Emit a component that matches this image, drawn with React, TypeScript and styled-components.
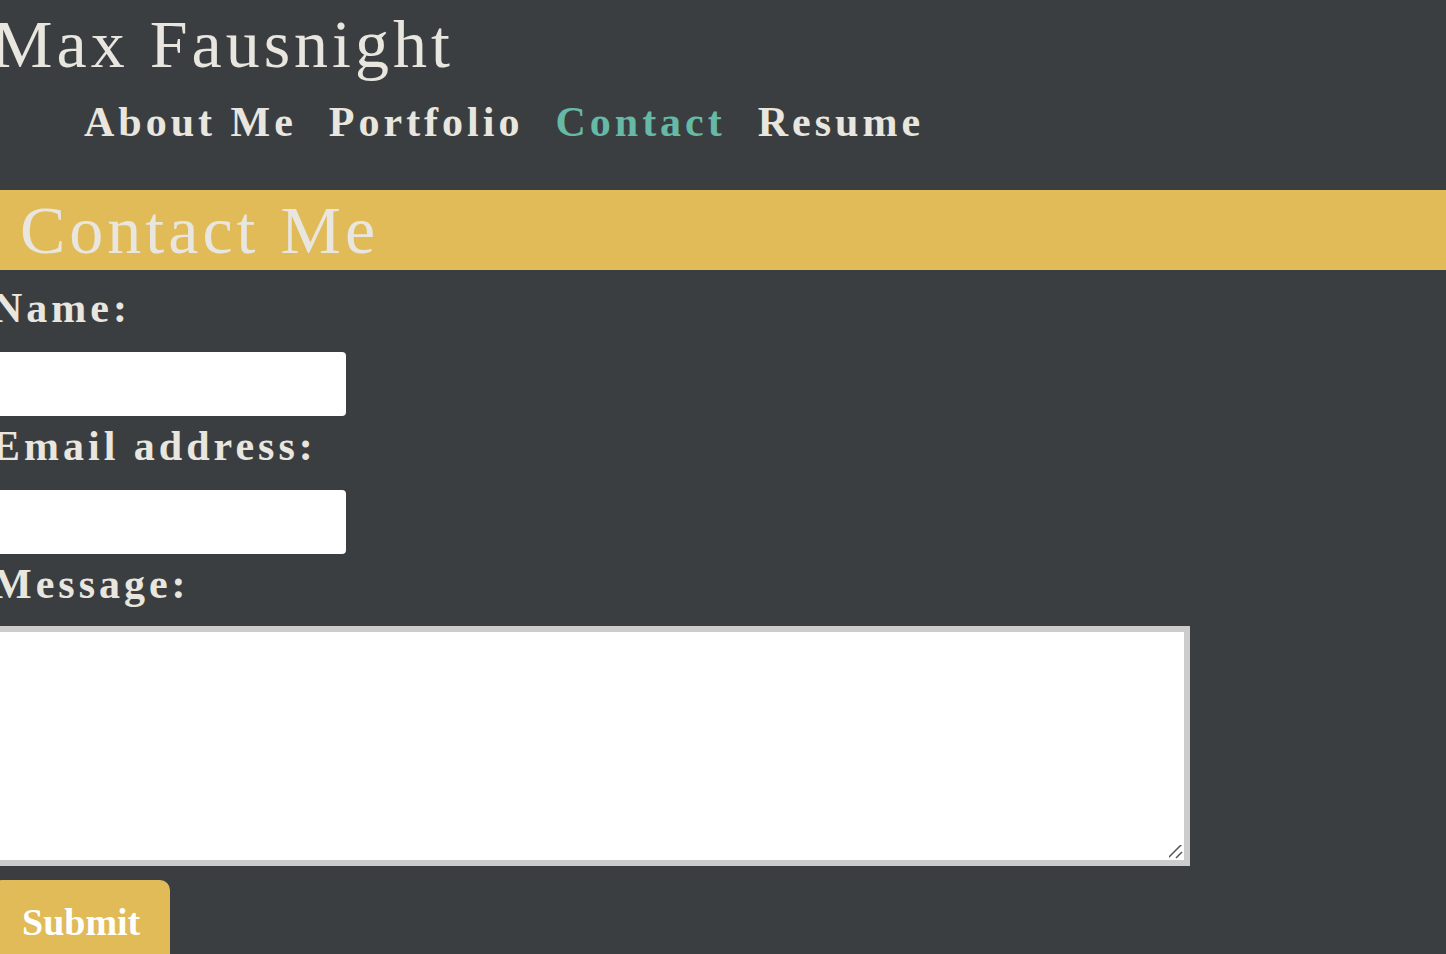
import React from "react";
import styled, { createGlobalStyle } from "styled-components";

const GlobalStyle = createGlobalStyle`
  * { box-sizing: border-box; }
  html { scrollbar-width: none; }
  body {
    margin: 0;
    background: #3b3e41;
    color: #e8e6df;
    font-family: "Liberation Serif", serif;
  }
`;

const Page = styled.div`
  margin-left: -8px;
`;

const Header = styled.header`
  padding: 4px 0 42px;
`;

const SiteTitle = styled.h1`
  margin: 0;
  font-size: 68px;
  line-height: 80px;
  font-weight: 400;
  letter-spacing: 4px;
`;

const Nav = styled.nav`
  display: flex;
  flex-wrap: wrap;
  gap: 32px;
  padding: 12px 0 0 92px;
`;

const NavLink = styled.a<{ $active?: boolean }>`
  color: ${(p) => (p.$active ? "#66b9a4" : "#e8e6df")};
  font-size: 42px;
  line-height: 52px;
  font-weight: 700;
  letter-spacing: 4px;
  text-decoration: none;
`;

const SectionTitle = styled.h2`
  margin: 0;
  padding-left: 28px;
  background: #e0bb58;
  font-size: 68px;
  line-height: 80px;
  font-weight: 400;
  letter-spacing: 4px;
`;

const Form = styled.form`
  display: flex;
  flex-direction: column;
  align-items: flex-start;
  padding-top: 8px;
`;

const Label = styled.label<{ $tight?: boolean }>`
  padding: 4px 0 ${(p) => (p.$tight ? 16 : 18)}px;
  font-size: 42px;
  line-height: 52px;
  font-weight: 700;
  letter-spacing: 4px;
`;

const TextInput = styled.input`
  width: 354px;
  height: 64px;
  padding: 8px;
  border: 0;
  border-radius: 4px;
  background: #fff;
  font-size: 26px;
`;

const Message = styled.textarea`
  width: 82.4%;
  height: 240px;
  padding: 8px;
  border: 6px solid #ccc;
  background: #fff;
  font-size: 26px;

  &::-webkit-scrollbar {
    width: 18px;
    height: 18px;
  }

  &::-webkit-resizer {
    background: url("data:image/svg+xml,%3Csvg xmlns='http://www.w3.org/2000/svg' width='18' height='18'%3E%3Cpath d='M2 16L16 2M10 16L16 10' stroke='%23555' stroke-width='1.5'/%3E%3C/svg%3E")
      no-repeat right bottom;
  }
`;

const Submit = styled.button`
  margin-top: 14px;
  padding: 16px 30px;
  border: 0;
  border-radius: 10px;
  background: #e0bb58;
  color: #fff;
  font-family: inherit;
  font-size: 38px;
  line-height: 52px;
  font-weight: 700;
`;

export default function App() {
  return (
    <Page>
      <GlobalStyle />
      <Header>
        <SiteTitle>Max Fausnight</SiteTitle>
        <Nav>
          <NavLink href="#about">About Me</NavLink>
          <NavLink href="#portfolio">Portfolio</NavLink>
          <NavLink href="#contact" $active>Contact</NavLink>
          <NavLink href="#resume">Resume</NavLink>
        </Nav>
      </Header>
      <main>
        <SectionTitle>Contact Me</SectionTitle>
        <Form>
          <Label htmlFor="name">Name:</Label>
          <TextInput id="name" type="text" />
          <Label htmlFor="email">Email address:</Label>
          <TextInput id="email" type="email" />
          <Label htmlFor="message" $tight>Message:</Label>
          <Message id="message" />
          <Submit type="submit">Submit</Submit>
        </Form>
      </main>
    </Page>
  );
}
